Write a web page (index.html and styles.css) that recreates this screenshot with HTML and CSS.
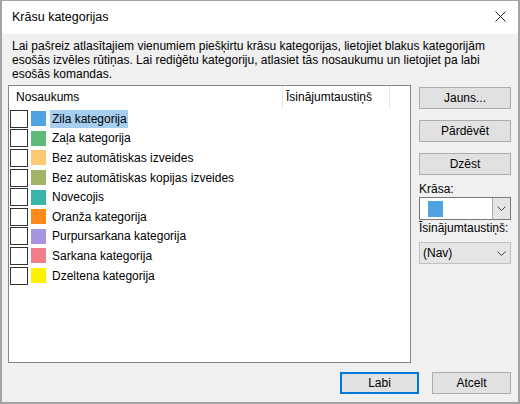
FILE: index.html
```html
<!DOCTYPE html>
<html lang="lv">
<head>
  <meta charset="UTF-8">
  <title>Krāsu kategorijas</title>
  <link rel="stylesheet" href="styles.css">
</head>
<body>

<div class="dialog">
  <!-- virsraksta josla -->
  <div class="titlebar">
    <span class="title">Krāsu kategorijas</span>
    <svg class="close" width="11" height="11" viewBox="0 0 11 11">
      <path d="M0.5 0.5 L10.5 10.5 M10.5 0.5 L0.5 10.5" stroke="#222" stroke-width="1" fill="none"/>
    </svg>
  </div>

  <div class="content">
    <p class="intro">
      Lai pašreiz atlasītajiem vienumiem piešķirtu krāsu kategorijas, lietojiet blakus kategorijām<br>
      esošās izvēles rūtiņas. Lai rediģētu kategoriju, atlasiet tās nosaukumu un lietojiet pa labi<br>
      esošās komandas.
    </p>

    <div class="main">
      <!-- kategoriju saraksts -->
      <div class="list">
        <div class="list-head">
          <div class="col col-name">Nosaukums</div>
          <div class="col col-key">Īsinājumtaustiņš</div>
          <div class="col col-rest"></div>
        </div>
        <div class="rows">
          <div class="row">
            <span class="check"></span><span class="swatch blue"></span>
            <span class="label selected">Zila kategorija</span>
          </div>
          <div class="row">
            <span class="check"></span><span class="swatch green"></span>
            <span class="label">Zaļa kategorija</span>
          </div>
          <div class="row">
            <span class="check"></span><span class="swatch peach"></span>
            <span class="label">Bez automātiskas izveides</span>
          </div>
          <div class="row">
            <span class="check"></span><span class="swatch olive"></span>
            <span class="label">Bez automātiskas kopijas izveides</span>
          </div>
          <div class="row">
            <span class="check"></span><span class="swatch teal"></span>
            <span class="label">Novecojis</span>
          </div>
          <div class="row">
            <span class="check"></span><span class="swatch orange"></span>
            <span class="label">Oranža kategorija</span>
          </div>
          <div class="row">
            <span class="check"></span><span class="swatch purple"></span>
            <span class="label">Purpursarkana kategorija</span>
          </div>
          <div class="row">
            <span class="check"></span><span class="swatch red"></span>
            <span class="label">Sarkana kategorija</span>
          </div>
          <div class="row">
            <span class="check"></span><span class="swatch yellow"></span>
            <span class="label">Dzeltena kategorija</span>
          </div>
        </div>
      </div>

      <!-- labā puse -->
      <div class="side">
        <button class="btn">Jauns...</button>
        <button class="btn">Pārdēvēt</button>
        <button class="btn">Dzēst</button>

        <div class="side-label">Krāsa:</div>
        <div class="color-select">
          <span class="swatch blue big"></span>
          <span class="drop-btn">
            <svg width="9" height="5" viewBox="0 0 9 5"><polyline points="0.5,0.5 4.5,4.5 8.5,0.5" fill="none" stroke="#444" stroke-width="1"/></svg>
          </span>
        </div>

        <div class="side-label side-label-key">Īsinājumtaustiņš:</div>
        <div class="combo">
          <span>(Nav)</span>
          <svg width="9" height="5" viewBox="0 0 9 5"><polyline points="0.5,0.5 4.5,4.5 8.5,0.5" fill="none" stroke="#444" stroke-width="1"/></svg>
        </div>
      </div>
    </div>

    <div class="footer">
      <button class="btn btn-default">Labi</button>
      <button class="btn">Atcelt</button>
    </div>
  </div>
</div>

</body>
</html>
```

FILE: styles.css
```css
/* === pamats === */
body {
  margin: 0;
  font-family: "Liberation Sans", "Noto Sans", sans-serif;
  font-size: 12px;
  color: #000;
  background: #fff;
}

.dialog {
  width: 520px;
  height: 404px;
  box-sizing: border-box;
  border: 2px solid #a3a3a3;
  border-top-width: 1px;
  display: flex;
  flex-direction: column;
  background: #f0f0f0;
}

/* === virsraksta josla === */
.titlebar {
  height: 31px;
  background: #fff;
  display: flex;
  align-items: center;
  justify-content: space-between;
  padding: 0 11px 2px 10px;
}

.title {
  font-size: 12.5px;
}

.close {
  display: block;
  margin-right: 1px;
}

/* === saturs === */
.content {
  flex: 1;
  display: flex;
  flex-direction: column;
  padding: 5px 7px 8px 6px;
}

.intro {
  margin: 0 0 4px 4px;
  line-height: 14px;
  white-space: nowrap;
}

.main {
  display: flex;
  gap: 8px;
}

/* === saraksts === */
.list {
  width: 403px;
  height: 278px;
  box-sizing: border-box;
  border: 1px solid #828790;
  background: #fff;
}

.list-head {
  display: flex;
  height: 22px;
}

.col {
  display: flex;
  align-items: center;
  padding-left: 7px;
  box-sizing: border-box;
}

.col-name {
  width: 274px;
  border-right: 1px solid #e5e5e5;
}

.col-key {
  width: 107px;
  padding-left: 3px;
  border-right: 1px solid #e5e5e5;
}

.col-rest {
  flex: 1;
}

.rows {
  padding-top: 1px;
}

.row {
  height: 19.6px;
  display: flex;
  align-items: center;
  padding-left: 1px;
}

.check {
  width: 18px;
  height: 18px;
  box-sizing: border-box;
  border: 1px solid #333;
  background: #fff;
}

.swatch {
  width: 15px;
  height: 15px;
  margin-left: 3px;
}

.label {
  margin-left: 5px;
  padding: 2px 1px;
  line-height: 14px;
}

.label.selected {
  background: #a6cef0;
  margin-left: 4px;
  padding-left: 2px;
}

.blue   { background: #4fa3e3; }
.green  { background: #5fbb79; }
.peach  { background: #ffc973; }
.olive  { background: #a3b367; }
.teal   { background: #38b4a8; }
.orange { background: #ff8a1c; }
.purple { background: #a895e0; }
.red    { background: #f17d89; }
.yellow { background: #fff200; }

/* === labā puse === */
.side {
  width: 92px;
  display: flex;
  flex-direction: column;
  padding-top: 2px;
}

.btn {
  height: 22px;
  box-sizing: border-box;
  border: 1px solid #adadad;
  background: #e1e1e1;
  font-family: inherit;
  font-size: 12px;
  color: #000;
  padding: 0;
  margin-bottom: 11px;
}

.side .btn:nth-of-type(3) {
  margin-bottom: 6px;
}

.side-label {
  height: 16px;
  line-height: 16px;
}

.side-label-key {
  margin-bottom: 6px;
}

.color-select {
  height: 23px;
  box-sizing: border-box;
  border: 1px solid #7a7a7a;
  background: #fff;
  display: flex;
  align-items: center;
}

.swatch.big {
  width: 15px;
  height: 16px;
  margin-left: 8px;
}

.drop-btn {
  margin-left: auto;
  width: 18px;
  height: 100%;
  box-sizing: border-box;
  border-left: 1px solid #adadad;
  background: #e5e5e5;
  display: flex;
  align-items: center;
  justify-content: center;
}

.combo {
  height: 22px;
  box-sizing: border-box;
  border: 1px solid #c0c0c0;
  background: #e5e5e5;
  display: flex;
  align-items: center;
  justify-content: space-between;
  padding: 0 4px 0 3px;
}

/* === apakšējās pogas === */
.footer {
  margin-top: auto;
  display: flex;
  justify-content: flex-end;
  gap: 13px;
}

.footer .btn {
  width: 79px;
  margin: 0;
}

.btn-default {
  border: 2px solid #0078d7;
}
```
